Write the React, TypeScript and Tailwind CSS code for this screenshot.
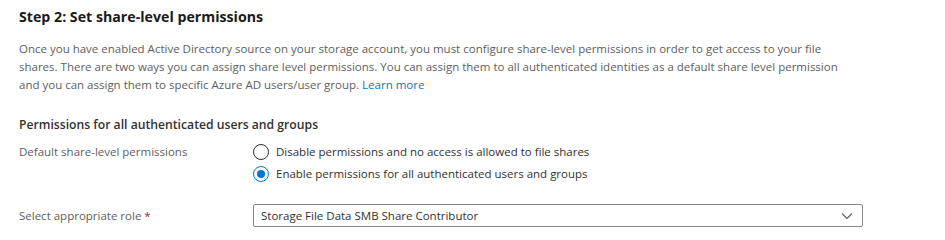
import React from "react";

export default function App() {
  return (
    <div
      className="w-[945px] h-[240px] bg-white overflow-hidden pl-[19px] pt-[7px] text-[#605e5c]"
      style={{ fontFamily: '"Open Sans", "Noto Sans", sans-serif' }}
    >
      <h2 className="text-[14.2px] leading-[20px] font-bold text-[#1b1a19]">Step 2: Set share-level permissions</h2>
      <p className="mt-[13px] w-[840px] text-[11.5px] leading-[18px]">
        Once you have enabled Active Directory source on your storage account, you must configure share-level permissions in order to get access to your file shares. There are two ways you can assign share level permissions. You can assign them to all authenticated identities as a default share level permission and you can assign them to specific Azure AD users/user group.{" "}
        <span className="text-[#0078d4]">Learn more</span>
      </p>
      <h3 className="mt-[22px] text-[12.2px] leading-[18px] font-semibold text-[#323130]">
        Permissions for all authenticated users and groups
      </h3>
      <div className="mt-[9px] flex">
        <div className="w-[234px] text-[11.5px] leading-[18px]">Default share-level permissions</div>
        <div className="flex flex-col gap-[4px] text-[11.5px] leading-[18px] text-[#323130]">
          <label className="flex items-center gap-[7px]">
            <span className="w-[16px] h-[16px] rounded-full border border-[#323130] bg-white" />
            Disable permissions and no access is allowed to file shares
          </label>
          <label className="flex items-center gap-[7px]">
            <span className="w-[16px] h-[16px] rounded-full border border-[#0078d4] bg-white flex items-center justify-center">
              <span className="w-[8px] h-[8px] rounded-full bg-[#0078d4]" />
            </span>
            Enable permissions for all authenticated users and groups
          </label>
        </div>
      </div>
      <div className="mt-[21px] flex items-center">
        <div className="w-[234px] text-[11.5px] leading-[18px]">
          Select appropriate role <span className="text-[#a4262c]">*</span>
        </div>
        <div className="w-[610px] h-[23px] border border-[#8a8886] rounded-[2px] flex items-center justify-between pl-[7px] pr-[9px] text-[11.5px] text-[#323130]">
          <span>Storage File Data SMB Share Contributor</span>
          <svg width="12" height="8" viewBox="0 0 12 8" fill="none">
            <path d="M1 1.5 L6 6.5 L11 1.5" stroke="#605e5c" strokeWidth="1.2" />
          </svg>
        </div>
      </div>
    </div>
  );
}
